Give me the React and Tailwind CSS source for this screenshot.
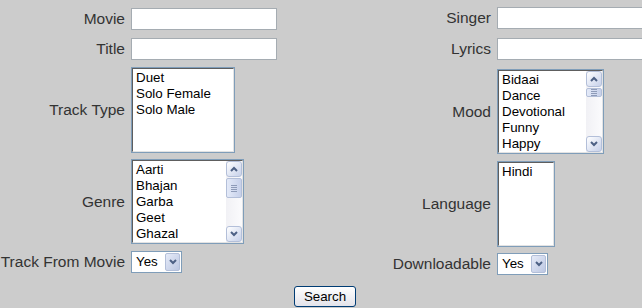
import React from 'react';

// little chevron used by scroll buttons and dropdowns
const Chevron = ({ up }) => (
  <svg width="8" height="6" viewBox="0 0 8 6">
    <path d={up ? 'M1 5L4 2L7 5' : 'M1 1L4 4L7 1'} fill="none" stroke="#4d6185" strokeWidth="2" />
  </svg>
);

function ScrollButton({ up }) {
  return (
    <div className="h-[16px] w-[16px] shrink-0 flex items-center justify-center rounded-[3px] border border-[#b3bfd9] bg-gradient-to-br from-[#ffffff] to-[#c7d1ea]">
      <Chevron up={up} />
    </div>
  );
}

function Scrollbar({ thumb }) {
  return (
    <div className="w-[16px] h-full flex flex-col bg-gradient-to-r from-[#f1f1f5] to-[#fbfbfd]">
      <ScrollButton up />
      <div className="flex-1 pt-[1px]">
        <div className={`${thumb} rounded-[2px] border border-[#b3bfd9] bg-gradient-to-r from-[#e4eaf8] to-[#c6d0ea] flex flex-col items-center justify-center gap-[1px]`}>
          <div className="w-[6px] h-[1px] bg-[#8e9bb8]" />
          <div className="w-[6px] h-[1px] bg-[#8e9bb8]" />
          <div className="w-[6px] h-[1px] bg-[#8e9bb8]" />
          <div className="w-[6px] h-[1px] bg-[#8e9bb8]" />
        </div>
      </div>
      <ScrollButton />
    </div>
  );
}

function ListBox({ size, items, thumb }) {
  return (
    <div className={`${size} border border-[#7f9db9] bg-white`}>
      <div className="h-full flex overflow-hidden border-t border-l border-[#5e5e5e] border-r-[#e3e3e3] border-b-[#e3e3e3] border-r border-b">
        <div className="flex-1 pt-[1px] overflow-hidden">
          {items.map((it) => (
            <div key={it} className="pl-[3px] text-[13.33px] leading-[16px] text-black whitespace-nowrap">{it}</div>
          ))}
        </div>
        {thumb && <Scrollbar thumb={thumb} />}
      </div>
    </div>
  );
}

function TextBox() {
  return <div className="w-[146px] h-[22px] border border-[#a5acb2] bg-white" />;
}

function Select() {
  return (
    <div className="w-[51px] h-[22px] border border-[#7f9db9] bg-white flex items-center p-[1px]">
      <span className="flex-1 pl-[3px] text-[13.33px] leading-[16px] text-black">Yes</span>
      <div className="w-[15px] h-full rounded-[2px] border border-[#b3bfd9] bg-gradient-to-br from-[#e6ebf8] to-[#bcc7e2] flex items-center justify-center">
        <Chevron />
      </div>
    </div>
  );
}

function Row({ label, labelW, className = '', children }) {
  return (
    <div className={`flex items-center ${className}`}>
      <span className={`${labelW} shrink-0 text-right text-[15.5px] leading-[18px] text-[#333333] whitespace-nowrap`}>{label}</span>
      <div className="ml-[6px]">{children}</div>
    </div>
  );
}

export default function App() {
  return (
    <div className="w-[642px] h-[308px] overflow-hidden bg-[#cccccc] font-['Liberation_Sans',Arial,sans-serif]">
      <div className="w-[650px]">
        <div className="flex">
          {/* left column */}
          <div className="w-[365px] shrink-0 pt-[8px] flex flex-col">
            <Row label="Movie" labelW="w-[125px]"><TextBox /></Row>
            <Row label="Title" labelW="w-[125px]" className="mt-[8px]"><TextBox /></Row>
            <Row label="Track Type" labelW="w-[125px]" className="mt-[7px]">
              <ListBox size="w-[104px] h-[86px]" items={['Duet', 'Solo Female', 'Solo Male']} />
            </Row>
            <Row label="Genre" labelW="w-[125px]" className="mt-[6px]">
              <ListBox size="w-[113px] h-[85px]" thumb="h-[20px]" items={['Aarti', 'Bhajan', 'Garba', 'Geet', 'Ghazal', 'Qawwali']} />
            </Row>
            <Row label="Track From Movie" labelW="w-[125px]" className="mt-[7px]"><Select /></Row>
          </div>

          {/* right column */}
          <div className="shrink-0 pt-[7px] flex flex-col">
            <Row label="Singer" labelW="w-[126px]"><TextBox /></Row>
            <Row label="Lyrics" labelW="w-[126px]" className="mt-[9px]"><TextBox /></Row>
            <Row label="Mood" labelW="w-[126px]" className="mt-[9px]">
              <ListBox size="w-[107px] h-[85px]" thumb="h-[9px]" items={['Bidaai', 'Dance', 'Devotional', 'Funny', 'Happy', 'Romantic']} />
            </Row>
            <Row label="Language" labelW="w-[126px]" className="mt-[7px]">
              <ListBox size="w-[58px] h-[86px]" items={['Hindi']} />
            </Row>
            <Row label="Downloadable" labelW="w-[126px]" className="mt-[6px]"><Select /></Row>
          </div>
        </div>

        <div className="flex justify-center mt-[11px]">
          <button className="w-[62px] h-[21px] rounded-[3px] border border-[#003c74] bg-gradient-to-b from-[#ffffff] to-[#e3e3ea] text-[13.33px] text-black leading-none">
            Search
          </button>
        </div>
      </div>
    </div>
  );
}
